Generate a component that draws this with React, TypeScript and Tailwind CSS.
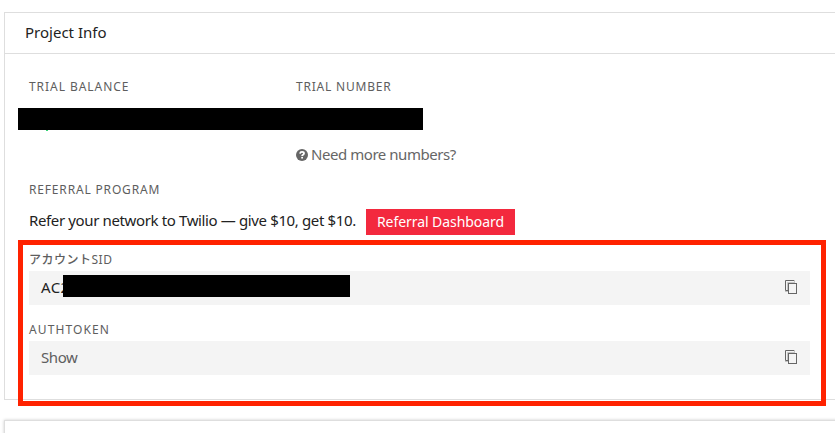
import React from "react";

function Label({ children, className = "" }: { children: React.ReactNode; className?: string }) {
  return (
    <div className={`h-4 whitespace-nowrap text-[12px] leading-4 text-[#5e5e5e] ${className}`}>{children}</div>
  );
}

function CopyIcon() {
  return (
    <svg width="14" height="14" viewBox="0 0 14 14" fill="none" className="shrink-0">
      <path d="M9.500 0v3M0 11.500h3" stroke="#c4c4c4" />
      <path d="M3 10.500H.5V.5h8.500" stroke="#666" />
      <path d="M2.500 10V2.500H9" stroke="#c4c4c4" />
      <rect x="3.500" y="3.500" width="8" height="10" fill="#f4f4f4" stroke="#666" />
    </svg>
  );
}

function HelpIcon() {
  return (
    <svg width="12" height="12" viewBox="0 0 12 12" className="shrink-0">
      <circle cx="6" cy="6" r="6" fill="#666" />
      <path d="M4 4.600C4.200 3.300 5 2.900 6 2.900c1.200 0 2 .6 2 1.500C8 5.700 6.100 5.600 6.100 7" stroke="#fff" strokeWidth="1.800" fill="none" />
      <rect x="5.200" y="7.900" width="1.800" height="1.600" fill="#fff" />
    </svg>
  );
}

function Field({ children }: { children: React.ReactNode }) {
  return (
    <div className="flex h-[34px] w-[781px] items-center justify-between bg-[#f4f4f4] pr-[11px] pb-0.5 pl-3 text-[15px]">
      {children}
      <CopyIcon />
    </div>
  );
}

export default function App() {
  return (
    <div className="relative h-[433px] w-full overflow-hidden bg-white pt-3 pl-1 font-['Noto_Sans','Noto_Sans_CJK_JP',sans-serif] text-[#222]">
      <section className="h-[388px] w-[850px] border border-[#dedede] bg-white">
        <header className="flex h-[41px] items-center border-b border-[#dedede] pb-0.5 pl-5 text-[15px]">
          <span className="whitespace-nowrap">Project Info</span>
        </header>
        <div className="pt-[25px] pl-6">
          <div className="grid grid-cols-[267px_1fr]">
            <Label className="tracking-[0.95px]">TRIAL BALANCE</Label>
            <Label className="tracking-[0.8px]">TRIAL NUMBER</Label>
          </div>
          <div className="mt-[50px] ml-[267px] flex h-5 items-center gap-[3px] text-[15px] leading-5 text-[#666]">
            <HelpIcon />
            <span className="whitespace-nowrap pb-0.5 tracking-[-0.45px]">Need more numbers?</span>
          </div>
          <Label className="mt-[17px] tracking-[0.83px]">REFERRAL PROGRAM</Label>
          <div className="mt-[11px] flex h-[26px] items-center text-[15px]">
            <span className="w-[337px] whitespace-nowrap pb-1 tracking-[-0.37px]">
              Refer your network to Twilio — give $10, get $10.
            </span>
            <button className="h-[26px] w-[149px] whitespace-nowrap bg-[#f3293e] pb-0.5 text-[14px] tracking-[-0.06px] text-white">
              Referral Dashboard
            </button>
          </div>
          <Label className="mt-[17px] tracking-[0.5px]">
            <span className="font-medium">アカウント</span>SID
          </Label>
          <div className="mt-[3px]">
            <Field>
              <span className="tracking-[0.4px]">AC2</span>
            </Field>
          </div>
          <Label className="mt-[17px] tracking-[1.1px]">AUTHTOKEN</Label>
          <div className="mt-[3px]">
            <Field>
              <span className="tracking-[-0.4px] text-[#5e5e5e]">Show</span>
            </Field>
          </div>
        </div>
      </section>
      <section className="mt-5 h-10 w-[850px] border border-[#dedede] bg-white shadow-[0_0_3px_rgba(0,0,0,0.2)]" />

      <div className="absolute top-[108px] left-[18px] h-[22px] w-[405px] bg-black" />
      <div className="absolute top-[130px] left-[46px] h-px w-0.5 bg-[#36d576]" />
      <div className="absolute top-[275px] left-[63px] h-[22px] w-[287px] bg-black" />
      <div className="absolute top-[240px] left-[18px] h-[166px] w-[808px] border-5 border-[#ff2200]" />
    </div>
  );
}
